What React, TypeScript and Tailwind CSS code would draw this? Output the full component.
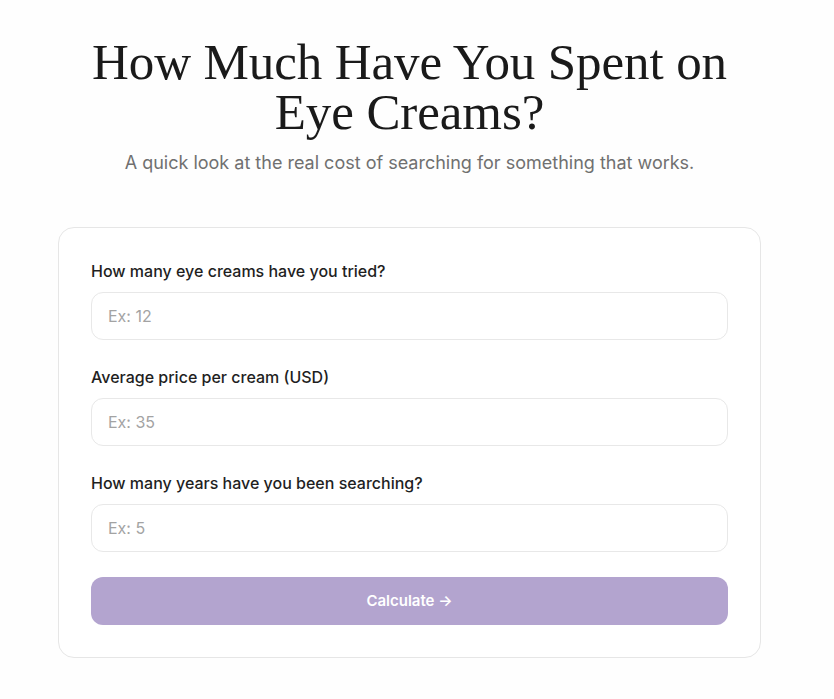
import { useState } from "react";

const fields = [
  { id: "count", label: "How many eye creams have you tried?", placeholder: "Ex: 12" },
  { id: "price", label: "Average price per cream (USD)", placeholder: "Ex: 35" },
  { id: "years", label: "How many years have you been searching?", placeholder: "Ex: 5" },
];

export default function App() {
  const [values, setValues] = useState<Record<string, string>>({});
  const ready = fields.every((f) => values[f.id]);

  return (
    <div
      className="min-h-screen bg-[#fefefe] pr-[15px] text-[#1a1a1a]"
      style={{ fontFamily: "Inter, 'Noto Sans', sans-serif" }}
    >
      <div className="mx-auto flex w-[703px] flex-col items-center pt-[37px]">
        {/* heading */}
        <h1 className="text-center font-['Liberation_Serif',serif] text-[51px] font-normal leading-[50px] tracking-[-0.1px] text-[#1a1a1a]">
          How Much Have You Spent on
          <br />
          Eye Creams?
        </h1>
        <p className="mt-[14px] text-center text-[18px] leading-6 text-[#707070]">
          A quick look at the real cost of searching for something that works.
        </p>

        {/* form card */}
        <form
          onSubmit={(e) => e.preventDefault()}
          className="mt-[52px] flex w-full flex-col rounded-2xl border border-[#e6e6e6] bg-white px-8 pb-8 pt-[32px]"
        >
          <div className="flex flex-col gap-[26px]">
            {fields.map((f) => (
              <label key={f.id} className="flex flex-col gap-[10px]">
                <span className="text-[16px] font-medium leading-[22px] text-[#1f1f1f]">
                  {f.label}
                </span>
                <input
                  type="number"
                  placeholder={f.placeholder}
                  value={values[f.id] ?? ""}
                  onChange={(e) => setValues({ ...values, [f.id]: e.target.value })}
                  className="h-12 w-full rounded-xl border border-[#e8e8e8] bg-white px-4 text-[16px] text-[#1a1a1a] outline-none placeholder:text-[#a3a3a3] focus:border-[#b3a4cf]"
                />
              </label>
            ))}
          </div>

          <button
            type="submit"
            className={`mt-[25px] h-12 w-full rounded-xl text-[15px] font-semibold text-white ${
              ready ? "bg-[#9b87c4]" : "bg-[#b3a4cf]"
            }`}
          >
            Calculate →
          </button>
        </form>
      </div>
    </div>
  );
}
